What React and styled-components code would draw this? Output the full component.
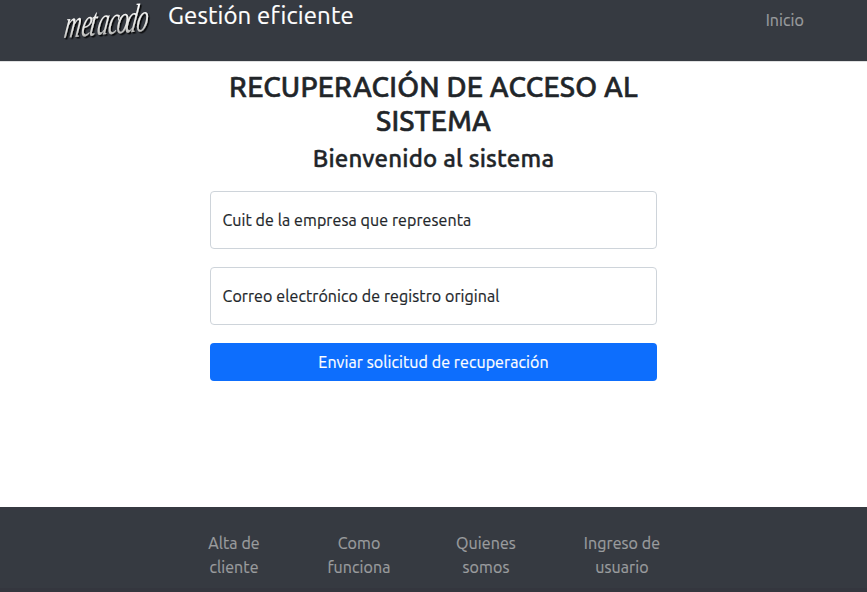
import React from "react";
import styled, { createGlobalStyle } from "styled-components";

const GlobalStyle = createGlobalStyle`
  *, *::before, *::after { box-sizing: border-box; }
  html, body, #root { height: 100%; }
  body {
    margin: 0;
    overflow: hidden;
    background: #fff;
    color: #212529;
    font: 400 16px/24px Ubuntu, "Noto Sans", sans-serif;
    letter-spacing: 0.09px;
    -webkit-text-stroke: 0.2px currentColor;
  }
  a { color: inherit; text-decoration: none; }
`;

const Page = styled.div`
  height: 592px;
  display: flex;
  flex-direction: column;
`;

const Header = styled.header`
  height: 62px;
  flex: none;
  display: flex;
  align-items: flex-start;
  padding: 0 63px 0 62px;
  background: #363a41;
  border-bottom: 1px solid #dfe0e1;
`;

const Logo = styled.svg`
  width: 90px;
  height: 44px;
  flex: none;
  overflow: visible;
`;

const Brand = styled.span`
  margin: 1px auto 0 16px;
  font-size: 24px;
  line-height: 30px;
  letter-spacing: 0.12px;
  white-space: nowrap;
  color: #fff;
`;

const NavLink = styled.a`
  margin-top: 8px;
  color: #9b9d9f;
`;

const Main = styled.main`
  flex: 1;
  width: 447px;
  margin: 0 auto;
  padding-top: 8px;
  text-align: center;
`;

const Title = styled.h1`
  margin: 0;
  font-size: 28px;
  line-height: 34px;
  font-weight: 500;
  letter-spacing: 0.2px;
  -webkit-text-stroke: 0.55px currentColor;
`;

const Subtitle = styled.h2`
  margin: 6px 0 18px;
  font-size: 24px;
  line-height: 29px;
  font-weight: 500;
  letter-spacing: 0.18px;
  -webkit-text-stroke: 0.4px currentColor;
`;

const Field = styled.label`
  display: flex;
  align-items: center;
  height: 58px;
  margin-bottom: 18px;
  padding: 0 11.5px;
  border: 1px solid #ced4da;
  border-radius: 4px;
`;

const Submit = styled.button`
  display: block;
  width: 100%;
  height: 38px;
  padding: 0;
  border: 0;
  border-radius: 4px;
  background: #0d6efd;
  color: #fff;
  font: inherit;
  letter-spacing: inherit;
`;

const Footer = styled.footer`
  height: 85px;
  flex: none;
  display: flex;
  justify-content: center;
  padding: 24px 1px 0 0;
  background: #363a41;
  border-bottom: 4px solid #34363e;
  color: #9b9d9f;
  text-align: center;
`;

const FooterLink = styled.a`
  display: flex;
  flex-direction: column;
  align-items: center;
  width: ${(p) => p.$width}px;
`;

const footerLinks = [
  { width: 124, lines: ["Alta de", "cliente"] },
  { width: 126, lines: ["Como", "funciona"] },
  { width: 128, lines: ["Quienes", "somos"] },
  { width: 144, lines: ["Ingreso de", "usuario"] },
];

function Wordmark() {
  return (
    <Logo viewBox="0 0 90 44" role="img" aria-label="metacodo">
      <defs>
        <linearGradient id="chrome" x1="0" y1="0" x2="0" y2="1">
          <stop offset="0.2" stopColor="#fff" />
          <stop offset="0.65" stopColor="#e2e2df" />
          <stop offset="1" stopColor="#8c8c8c" />
        </linearGradient>
        <filter id="shade" x="-10%" y="-10%" width="120%" height="130%">
          <feDropShadow dx="1.5" dy="1.5" stdDeviation="0.7" floodColor="#000" floodOpacity="0.9" />
        </filter>
      </defs>
      <g filter="url(#shade)" fill="url(#chrome)" fontFamily="Liberation Serif, serif" fontStyle="italic" letterSpacing="0">
        <text
          transform="translate(1 38) rotate(-5) skewX(-14) scale(0.58 1)"
          fontSize="40"
          x="0 30 44 57 76 91 106 125"
        >
          metacodo
        </text>
      </g>
    </Logo>
  );
}

export default function App() {
  return (
    <>
      <GlobalStyle />
      <Page>
        <Header>
          <Wordmark />
          <Brand>Gestión eficiente</Brand>
          <NavLink href="#">Inicio</NavLink>
        </Header>
        <Main>
          <Title>
            RECUPERACIÓN DE ACCESO AL
            <br />
            SISTEMA
          </Title>
          <Subtitle>Bienvenido al sistema</Subtitle>
          <Field>Cuit de la empresa que representa</Field>
          <Field>Correo electrónico de registro original</Field>
          <Submit type="button">Enviar solicitud de recuperación</Submit>
        </Main>
        <Footer>
          {footerLinks.map(({ width, lines }) => (
            <FooterLink href="#" key={lines[0]} $width={width}>
              {lines.map((text) => <span key={text}>{text}</span>)}
            </FooterLink>
          ))}
        </Footer>
      </Page>
    </>
  );
}
